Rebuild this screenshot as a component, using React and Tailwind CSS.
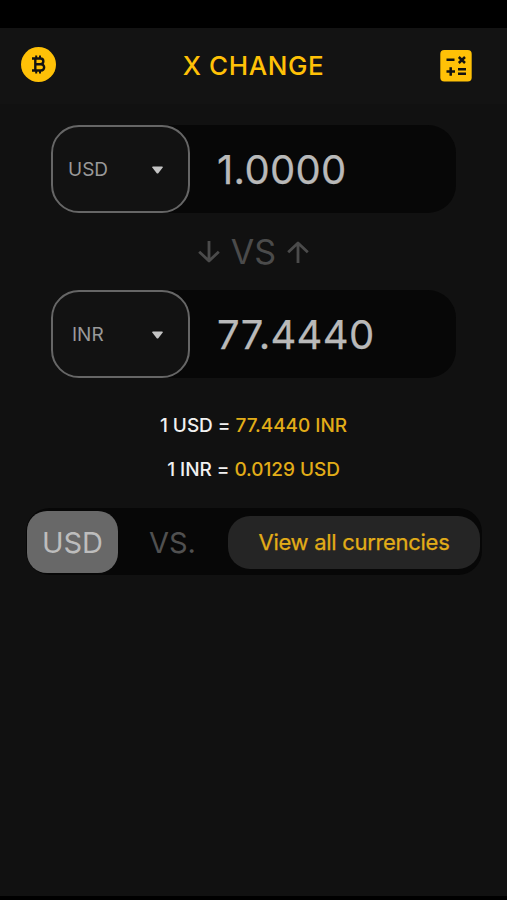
import React from 'react';

function BitcoinIcon() {
    return (
        <svg width="35" height="35" viewBox="0 0 35 35" className="mb-[3px]">
            <circle cx="17.5" cy="17.5" r="17.5" fill="#ffc107" />
            <g stroke="#121212" fill="none">
                <path strokeWidth="2.4" d="M11 11.5h8.5a2.8 2.8 0 0 1 0 5.7h-4.5M15 17.2h5a3.15 3.15 0 0 1 0 6.3H11M14.3 11.5v12" />
                <path strokeWidth="2" d="M15.2 8.5v3M19 8.5v3M15.2 23.5v3M19 23.5v3" />
            </g>
        </svg>
    );
}

function MathIcon() {
    return (
        <svg width="32" height="32" viewBox="0 0 32 32">
            <rect x=".3" width="31.4" height="31.4" rx="4" fill="#ffc107" />
            <g stroke="#121212" strokeWidth="2.5" fill="none">
                <path d="M6.5 9.8h8M18.8 7l6.2 6M25 7l-6.2 6M6.5 21.5h8.5M10.7 17.2v8.6M18 19.3h8M18 23.7h8" />
            </g>
        </svg>
    );
}

function Arrow({ up }) {
    return (
        <svg width="22" height="22" viewBox="0 0 22 22" fill="none" stroke="#4b4b4b" strokeWidth="2.8" strokeLinejoin="round" className={up ? 'rotate-180' : ''}>
            <path d="M11 0v20M1.2 10.7L11 20 20.8 10.7" />
        </svg>
    );
}

function CurrencyRow({ code, value, padding }) {
    return (
        <div className="ml-[51px] flex h-[88px] w-[405px] items-center rounded-[28px] bg-[#070707]">
            <button className={`flex h-full w-[139px] items-center justify-between rounded-[28px] border-2 border-[#666] bg-[#121212] pt-px pr-[25px] ${padding}`}>
                <span className="text-[19px] leading-6 text-[#999]">{code}</span>
                <svg width="11" height="8" viewBox="0 0 11 8" fill="#c4c4c4">
                    <path d="M1 .5h9q1 0 .7 1L6.5 6.9q-1 1-2 0L.3 1.5Q0 .5 1 .5z" />
                </svg>
            </button>
            <span className="ml-[27px] pt-px text-[40px] leading-none tracking-[0.3px] text-[#b9b9b9] [-webkit-text-stroke:0.25px_#b9b9b9]">{value}</span>
        </div>
    );
}

function RateLine({ from, to }) {
    return (
        <p className="h-11 text-center text-[19px] leading-[44px] font-medium tracking-[-0.05px] whitespace-nowrap text-[#f1f1f1]">
            {from} = <span className="text-[#e2ad18]">{to}</span>
        </p>
    );
}

export default function App() {
    return (
        <div className="h-[900px] w-[507px] overflow-hidden border-b-4 border-black bg-[#111] font-['Inter',sans-serif]">
            <div className="h-7 bg-black"></div>

            <header className="flex h-[76px] items-center justify-between bg-[#131313] pr-[35px] pl-[21px]">
                <BitcoinIcon />
                <h1 className="ml-[11px] text-[26px] leading-8 font-medium tracking-[0.6px] text-[#ffc107]">X CHANGE</h1>
                <MathIcon />
            </header>

            <main className="pt-[21px]">
                <CurrencyRow code="USD" value="1.0000" padding="pl-[15px]" />
                <div className="flex h-[77px] items-center justify-center gap-[11px] text-[34px] text-[#4b4b4b]">
                    <Arrow />
                    <span className="leading-none">VS</span>
                    <Arrow up />
                </div>
                <CurrencyRow code="INR" value="77.4440" padding="pl-[19px]" />

                <section className="mt-[26px]">
                    <RateLine from="1 USD" to="77.4440 INR" />
                    <RateLine from="1 INR" to="0.0129 USD" />
                </section>

                {/* Comparison bar */}
                <div className="mt-[16px] ml-[26px] flex h-[67px] w-[456px] items-center rounded-[24px] bg-[#070707] pl-px">
                    <div className="flex h-[62px] w-[91px] items-center justify-center rounded-[20px] bg-[#686868] pt-[2px] text-[29px] text-[#bdbdbd]">USD</div>
                    <span className="w-[109px] pt-[2px] text-center text-[29px] text-[#505050]">VS.</span>
                    <button className="mt-px ml-px h-[53px] w-[252px] rounded-[22px] bg-[#252525] pt-px text-[22px] tracking-[-0.3px] text-[#e2ad18] [-webkit-text-stroke:0.25px_#e2ad18]">View all currencies</button>
                </div>
            </main>
        </div>
    );
}
